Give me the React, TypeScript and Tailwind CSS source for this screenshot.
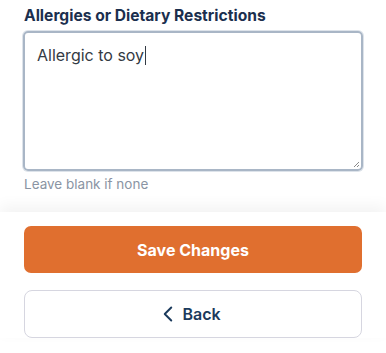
import { ChevronLeft } from 'lucide-react';

export default function App() {
  return (
    <div className="flex h-[353px] w-[386px] flex-col overflow-hidden bg-white font-['Inter',sans-serif]">
      <div className="px-6 pt-[6px] pb-[18px]">
        <label className="block text-[15.6px] font-bold leading-5 text-[#1b2f4e]">
          Allergies or Dietary Restrictions
        </label>
        <div className="relative mt-[5px] -ml-px h-[140px] w-[340px] rounded-[5px] border-2 border-[#a9b6c6] ring-1 ring-[#dde3ea]">
          <div className="flex items-center px-3 pt-[10px] text-[16px] leading-6 text-[#333a44]">
            Allergic to soy
            <span className="ml-px inline-block h-[19px] w-px bg-[#333a44]" />
          </div>
          <svg className="absolute right-[1px] bottom-[1px]" width="7" height="7" viewBox="0 0 7 7">
            <path d="M6 1 L1 6 M6 4 L4 6" stroke="#8a8a8a" strokeWidth="1" />
          </svg>
        </div>
        <p className="mt-[3px] text-[13.5px] leading-5 text-[#8a94a3]">Leave blank if none</p>
      </div>
      <div className="flex flex-col gap-[17px] bg-white px-6 pt-[14px] shadow-[0_-6px_14px_rgba(0,0,0,0.05)]">
        <button className="h-[47px] w-[338px] rounded-[7px] bg-[#e06f2f] text-[16px] font-bold text-white">
          Save Changes
        </button>
        <button className="flex h-[48px] w-[338px] items-center justify-center gap-px rounded-[8px] border-[1.5px] border-[#d6d6e0] pr-[10px] text-[16px] font-semibold text-[#1b3a5c]">
          <ChevronLeft size={26} strokeWidth={1.8} />
          Back
        </button>
      </div>
    </div>
  );
}
